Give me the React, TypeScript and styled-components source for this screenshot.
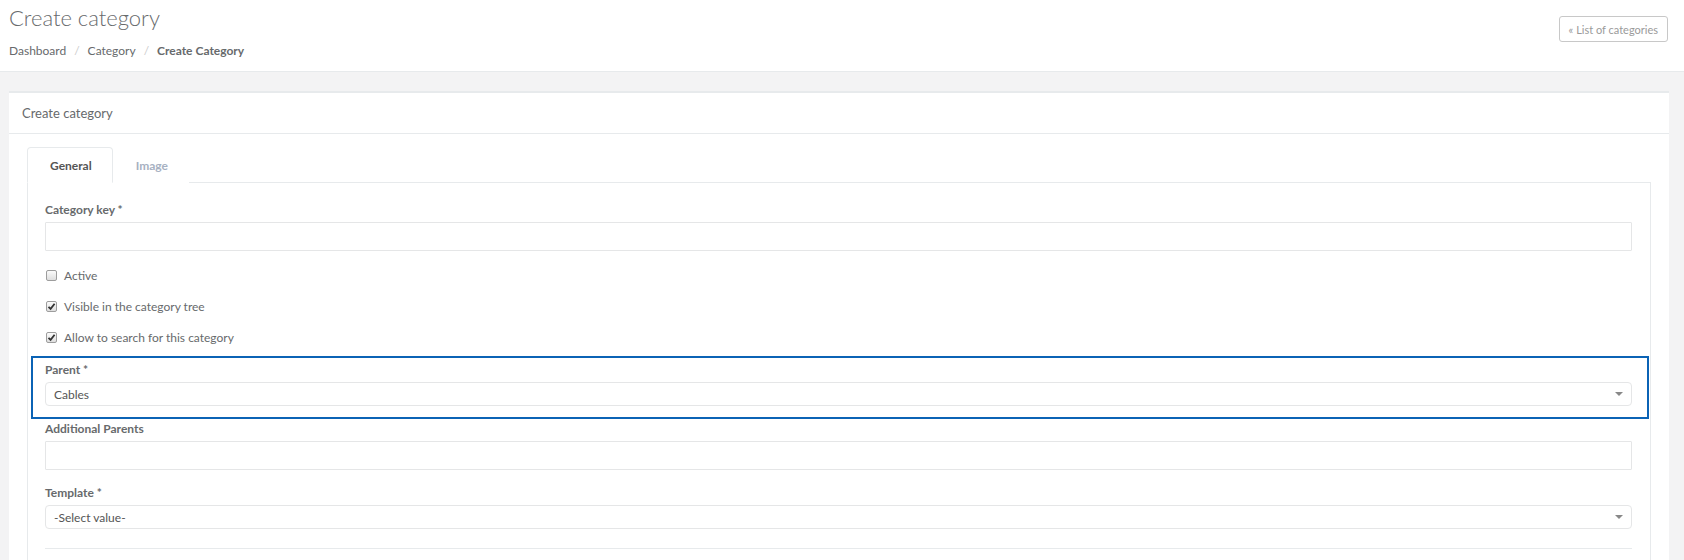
import styled, { createGlobalStyle } from 'styled-components'

const GlobalStyle = createGlobalStyle`
  html, body {
    margin: 0;
    padding: 0;
    background: #f3f3f4;
    font-family: Lato, "Open Sans", "Liberation Sans", sans-serif;
    color: #676a6c;
  }
  * { box-sizing: border-box; }
`

const PageHeader = styled.header`
  display: flex;
  justify-content: space-between;
  align-items: flex-start;
  height: 72px;
  padding: 5px 16px 0 9px;
  background: #fff;
  border-bottom: 1px solid #e7eaec;
`

const TitleBlock = styled.div`
  display: flex;
  flex-direction: column;
`

const PageTitle = styled.h2`
  margin: 0;
  font-size: 22px;
  line-height: 26px;
  font-weight: 300;
  color: #676a6c;
`

const Breadcrumb = styled.ol`
  display: flex;
  align-items: center;
  margin: 12px 0 0;
  padding: 0;
  list-style: none;
  font-size: 12px;
  line-height: 16px;
`

const Crumb = styled.li<{ $active?: boolean }>`
  font-weight: ${({ $active }) => ($active ? 700 : 400)};
  color: #676a6c;
`

const CrumbSep = styled.li`
  padding: 0 8px;
  color: #ccc;
`

const BackButton = styled.button`
  margin-top: 11px;
  height: 26px;
  padding: 0 9px;
  background: #fff;
  border: 1px solid #c8c8c8;
  border-radius: 3px;
  font-family: inherit;
  font-size: 11px;
  color: #9a9a9a;
`

const Content = styled.main`
  padding: 19px 15px 0 9px;
`

const Panel = styled.section`
  background: #fff;
  border-top: 2px solid #e7eaec;
`

const PanelTitle = styled.div`
  display: flex;
  align-items: center;
  height: 41px;
  padding: 0 13px;
  border-bottom: 1px solid #e7eaec;
  font-size: 13px;
  color: #676a6c;
`

const PanelBody = styled.div`
  padding: 13px 18px 20px;
`

const TabList = styled.div`
  display: flex;
`

const Tab = styled.div<{ $active?: boolean }>`
  position: relative;
  z-index: 1;
  display: flex;
  align-items: center;
  height: 36px;
  padding: 0 20px 0 22px;
  margin-bottom: -1px;
  font-size: 12px;
  font-weight: 700;
  color: ${({ $active }) => ($active ? '#555' : '#a7b1c2')};
  background: #fff;
  border: 1px solid ${({ $active }) => ($active ? '#e7eaec' : 'transparent')};
  border-bottom-color: ${({ $active }) => ($active ? '#fff' : 'transparent')};
  border-radius: 4px 4px 0 0;
`

const TabContent = styled.div`
  border: 1px solid #e7eaec;
  border-bottom: none;
  padding: 19px 18px 40px 17px;
`

const FormGroup = styled.div<{ $highlight?: boolean }>`
  position: relative;
  margin-bottom: 15px;

  ${({ $highlight }) =>
    $highlight &&
    `
    &::after {
      content: '';
      position: absolute;
      top: -6px;
      left: -14px;
      right: -17px;
      bottom: -13px;
      border: 2px solid #0b63b5;
      pointer-events: none;
    }
  `}
`

const Label = styled.label`
  display: block;
  margin-bottom: 5px;
  font-size: 12px;
  line-height: 15px;
  font-weight: 700;
  color: #676a6c;
`

const TextInput = styled.div`
  height: 29px;
  border: 1px solid #e5e6e7;
  border-radius: 1px;
  background: #fff;
`

const Select = styled.div`
  display: flex;
  align-items: center;
  justify-content: space-between;
  height: 24px;
  padding: 0 8px;
  border: 1px solid #e5e6e7;
  border-radius: 4px;
  font-size: 12px;
  color: #555;
`

const Caret = styled.span`
  width: 0;
  height: 0;
  border-left: 4px solid transparent;
  border-right: 4px solid transparent;
  border-top: 4px solid #888;
`

const CheckList = styled.div`
  display: flex;
  flex-direction: column;
  gap: 13px;
  margin-bottom: 16px;
`

const CheckRow = styled.label`
  display: flex;
  align-items: center;
  height: 18px;
  gap: 7px;
  font-size: 12px;
  color: #676a6c;
`

const Box = styled.span`
  display: flex;
  align-items: center;
  justify-content: center;
  width: 11px;
  height: 11px;
  margin-left: 1px;
  border: 1px solid #9d9d9d;
  border-radius: 2px;
  background: linear-gradient(#fbfbfb, #dedede);
`

const Divider = styled.hr`
  margin: 19px 0 0;
  border: none;
  border-top: 1px solid #e7eaec;
`

function Checkbox({ label, checked }: { label: string; checked?: boolean }) {
  return (
    <CheckRow>
      <Box>
        {checked && (
          <svg width="9" height="9" viewBox="0 0 9 9">
            <path d="M1.5 4.8 L3.6 6.9 L7.6 1.8" fill="none" stroke="#333" strokeWidth="1.8" />
          </svg>
        )}
      </Box>
      {label}
    </CheckRow>
  )
}

export default function App() {
  return (
    <>
      <GlobalStyle />
      <PageHeader>
        <TitleBlock>
          <PageTitle>Create category</PageTitle>
          <Breadcrumb>
            <Crumb>Dashboard</Crumb>
            <CrumbSep>/</CrumbSep>
            <Crumb>Category</Crumb>
            <CrumbSep>/</CrumbSep>
            <Crumb $active>Create Category</Crumb>
          </Breadcrumb>
        </TitleBlock>
        <BackButton type="button">« List of categories</BackButton>
      </PageHeader>
      <Content>
        <Panel>
          <PanelTitle>Create category</PanelTitle>
          <PanelBody>
            <TabList>
              <Tab $active>General</Tab>
              <Tab>Image</Tab>
            </TabList>
            <TabContent>
              <FormGroup>
                <Label>Category key *</Label>
                <TextInput />
              </FormGroup>
              <CheckList>
                <Checkbox label="Active" />
                <Checkbox label="Visible in the category tree" checked />
                <Checkbox label="Allow to search for this category" checked />
              </CheckList>
              <FormGroup $highlight>
                <Label>Parent *</Label>
                <Select>
                  Cables
                  <Caret />
                </Select>
              </FormGroup>
              <FormGroup>
                <Label>Additional Parents</Label>
                <TextInput />
              </FormGroup>
              <FormGroup>
                <Label>Template *</Label>
                <Select>
                  -Select value-
                  <Caret />
                </Select>
              </FormGroup>
              <Divider />
            </TabContent>
          </PanelBody>
        </Panel>
      </Content>
    </>
  )
}
